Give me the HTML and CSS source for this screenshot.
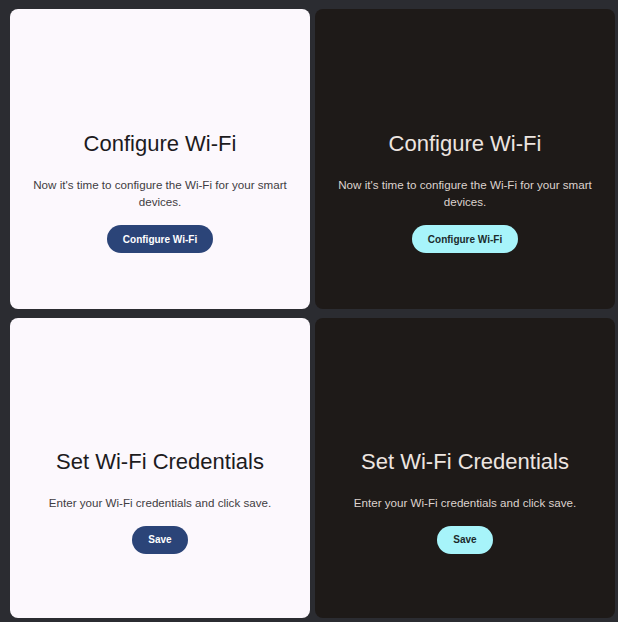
FILE: index.html
```html
<!DOCTYPE html>
<html lang="en">
<head>
<meta charset="utf-8">
<title>Wi-Fi setup</title>
<link rel="stylesheet" href="styles.css">
</head>
<body>
<main class="grid">
  <section class="card light">
    <h2 class="title">Configure Wi-Fi</h2>
    <p class="text">Now it's time to configure the Wi-Fi for your smart devices.</p>
    <button class="btn">Configure Wi-Fi</button>
  </section>
  <section class="card dark">
    <h2 class="title">Configure Wi-Fi</h2>
    <p class="text">Now it's time to configure the Wi-Fi for your smart devices.</p>
    <button class="btn">Configure Wi-Fi</button>
  </section>
  <section class="card light">
    <h2 class="title">Set Wi-Fi Credentials</h2>
    <p class="text">Enter your Wi-Fi credentials and click save.</p>
    <button class="btn">Save</button>
  </section>
  <section class="card dark">
    <h2 class="title">Set Wi-Fi Credentials</h2>
    <p class="text">Enter your Wi-Fi credentials and click save.</p>
    <button class="btn">Save</button>
  </section>
</main>
</body>
</html>
```
FILE: styles.css
```css
html, body {
  margin: 0;
  padding: 0;
  background: #2b2c31;
}
body {
  font-family: "Liberation Sans", Arial, Helvetica, sans-serif;
}
.grid {
  display: grid;
  grid-template-columns: 300px 300px;
  grid-auto-rows: 300px;
  column-gap: 5px;
  row-gap: 9px;
  padding: 9px 0 0 10px;
}
.card {
  border-radius: 8px;
  display: flex;
  flex-direction: column;
  align-items: center;
  justify-content: center;
  padding: 65px 20px 0;
  box-sizing: border-box;
  text-align: center;
}
.light {
  background: #fcf8fd;
  color: #1d1b1e;
}
.dark {
  background: #1e1a18;
  color: #ede5e0;
}
.title {
  margin: 0;
  font-size: 22px;
  font-weight: 400;
  line-height: 28px;
}
.text {
  margin: 18px 0 0;
  font-size: 11.6px;
  line-height: 17px;
}
.light .text { color: #3f3c42; }
.dark .text { color: #ddd3ce; }
.btn {
  margin-top: 15px;
  border: none;
  border-radius: 14px;
  height: 28px;
  padding: 0 16px;
  font-family: inherit;
  font-size: 10px;
  font-weight: 700;
}
.light .btn {
  background: #2b4478;
  color: #ffffff;
}
.dark .btn {
  background: #a7f4fa;
  color: #1b2a2c;
}
```
